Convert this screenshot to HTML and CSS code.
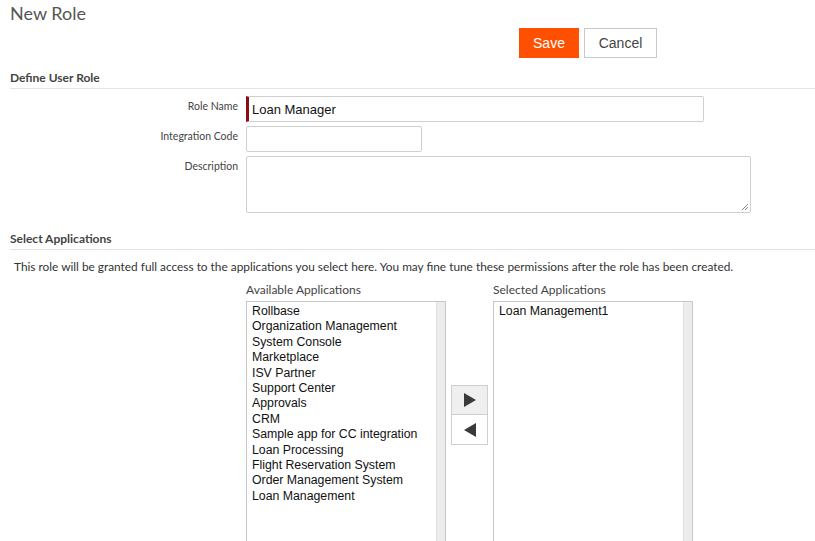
FILE: index.html
```html
<!DOCTYPE html>
<html>
<head>
<meta charset="utf-8">
<link rel="stylesheet" href="styles.css">
</head>
<body>
<div class="page">
  <h1 class="title">New Role</h1>
  <div class="actions">
    <button class="btn btn-save">Save</button>
    <button class="btn btn-cancel">Cancel</button>
  </div>

  <div class="section-head">Define User Role</div>
  <div class="form">
    <div class="row">
      <label class="lbl">Role Name</label>
      <div class="input input-name required">Loan Manager</div>
    </div>
    <div class="row">
      <label class="lbl">Integration Code</label>
      <div class="input input-code"></div>
    </div>
    <div class="row">
      <label class="lbl">Description</label>
      <div class="input textarea">
        <svg class="grip" width="9" height="9" viewBox="0 0 9 9"><path d="M8 2 L2 8 M8 5 L5 8" stroke="#888" stroke-width="1" fill="none"/></svg>
      </div>
    </div>
  </div>

  <div class="section-head section-apps">Select Applications</div>
  <p class="note">This role will be granted full access to the applications you select here. You may fine tune these permissions after the role has been created.</p>

  <div class="picker">
    <div class="col">
      <div class="col-title">Available Applications</div>
      <div class="listbox">
        <ul class="items">
          <li>Rollbase</li>
          <li>Organization Management</li>
          <li>System Console</li>
          <li>Marketplace</li>
          <li>ISV Partner</li>
          <li>Support Center</li>
          <li>Approvals</li>
          <li>CRM</li>
          <li>Sample app for CC integration</li>
          <li>Loan Processing</li>
          <li>Flight Reservation System</li>
          <li>Order Management System</li>
          <li>Loan Management</li>
        </ul>
        <div class="track"></div>
      </div>
    </div>
    <div class="movers">
      <button class="mover mover-add"><svg width="12" height="14" viewBox="0 0 12 14"><path d="M0 0 L12 7 L0 14 Z" fill="#3a3a3a"/></svg></button>
      <button class="mover mover-remove"><svg width="12" height="14" viewBox="0 0 12 14"><path d="M12 0 L0 7 L12 14 Z" fill="#3a3a3a"/></svg></button>
    </div>
    <div class="col">
      <div class="col-title">Selected Applications</div>
      <div class="listbox">
        <ul class="items">
          <li>Loan Management1</li>
        </ul>
        <div class="track"></div>
      </div>
    </div>
  </div>
</div>
</body>
</html>
```

FILE: styles.css
```css
* { box-sizing: border-box; }
html, body { margin: 0; padding: 0; background: #fff; overflow: hidden; }
body { font-family: Lato, "Open Sans", sans-serif; color: #333; }
.page { width: 815px; height: 541px; overflow: hidden; }

.title {
  margin: 0;
  padding: 2px 0 0 10px;
  font-size: 18px;
  line-height: 22px;
  font-weight: 400;
  color: #555;
}

.actions {
  display: flex;
  gap: 5px;
  margin: 4px 0 0 519px;
}
.btn {
  height: 30px;
  font-family: "Liberation Sans", Arial, sans-serif;
  font-size: 14px;
  border-radius: 0;
  padding: 0;
  cursor: pointer;
}
.btn-save {
  width: 60px;
  background: #fe5000;
  border: 1px solid #fe5000;
  color: #fff;
}
.btn-cancel {
  width: 73px;
  background: #fff;
  border: 1px solid #c8c8c8;
  color: #444;
}

.section-head {
  margin: 13px 0 0 10px;
  padding-bottom: 3px;
  border-bottom: 1px solid #e4e4e4;
  font-size: 12px;
  line-height: 14px;
  font-weight: 700;
  color: #444;
}

.form {
  display: flex;
  flex-direction: column;
  gap: 4px;
  margin-top: 7px;
}
.row {
  display: flex;
  align-items: flex-start;
  gap: 8px;
}
.lbl {
  width: 238px;
  text-align: right;
  font-size: 10.5px;
  line-height: 14px;
  padding-top: 3px;
  color: #444;
}
.input {
  height: 26px;
  border: 1px solid #cfcfcf;
  border-radius: 2px;
  background: #fff;
  font-family: "Liberation Sans", Arial, sans-serif;
  font-size: 13px;
  line-height: 25px;
  padding-left: 3px;
  color: #111;
}
.input-name { width: 458px; }
.required { border-left: 3px solid #8b0d14; border-radius: 0 2px 2px 0; }
.input-code { width: 176px; }
.textarea {
  width: 505px;
  height: 57px;
  position: relative;
}
.grip { position: absolute; right: 1px; bottom: 1px; }

.section-apps { margin-top: 19px; }

.note {
  margin: 10px 0 0 14px;
  font-size: 11.85px;
  line-height: 14px;
  color: #333;
}

.picker {
  display: flex;
  align-items: flex-start;
  margin: 9px 0 0 246px;
}
.col { display: flex; flex-direction: column; }
.col-title {
  font-size: 12px;
  line-height: 14px;
  color: #444;
  margin-bottom: 4px;
}
.listbox {
  width: 200px;
  height: 260px;
  border: 1px solid #c8c8c8;
  display: flex;
}
.items {
  flex: 1;
  list-style: none;
  margin: 0;
  padding: 2px 0 0 5px;
  font-family: "Liberation Sans", Arial, sans-serif;
  font-size: 12.3px;
  line-height: 15.4px;
  color: #111;
}
.track {
  width: 9px;
  background: #ececec;
  border-left: 1px solid #e2e2e2;
}
.movers {
  display: flex;
  flex-direction: column;
  margin: 102px 5px 0 5px;
}
.mover {
  width: 37px;
  height: 30px;
  border: 1px solid #cfcfcf;
  padding: 0;
  display: flex;
  align-items: center;
  justify-content: center;
}
.mover-add { background: #efefef; }
.mover-remove { background: #fff; border-top: none; }
```
